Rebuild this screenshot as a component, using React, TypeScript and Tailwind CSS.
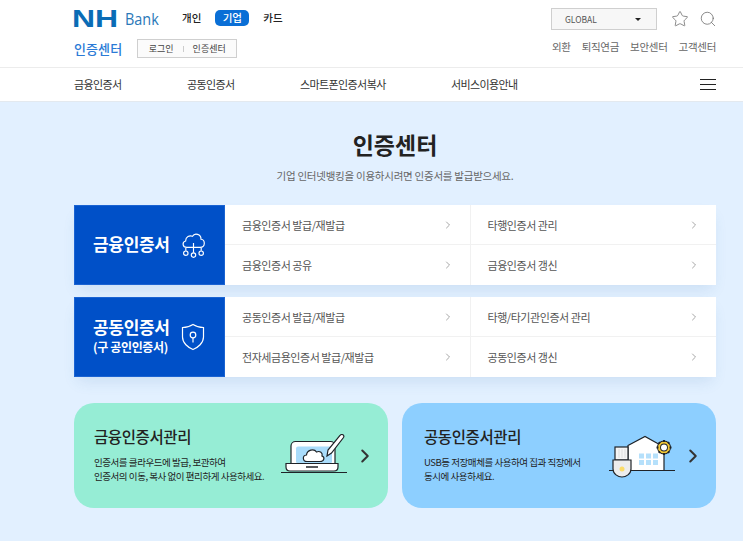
import React from 'react';
import { ChevronRight, Star, Search } from 'lucide-react';

const font = { fontFamily: '"Noto Sans CJK KR", "Noto Sans", sans-serif' };

const CloudIcon = () => (
  <svg width="25" height="28" viewBox="0 0 26 28" fill="none" stroke="white" strokeWidth="1.2">
    <path d="M6 16.5 C1.5 16.5 0.8 11 4.8 9.8 C4.8 5.5 9 3.5 12 5 C14 1 21 2.5 20.8 8 C25.5 8.6 25.5 16.5 20 16.5 Z" />
    <path d="M13 12 V22 M5 20 V17 M21 20 V17" />
    <circle cx="5" cy="22.5" r="2.3" />
    <circle cx="13" cy="24.5" r="2.3" />
    <circle cx="21" cy="22.5" r="2.3" />
  </svg>
);

const ShieldIcon = () => (
  <svg width="24" height="28" viewBox="0 0 24 28" fill="none" stroke="white" strokeWidth="1.2">
    <path d="M12 1.5 C15 3.5 19 4.5 22.5 4.5 V14 C22.5 20 17 24.5 12 26.5 C7 24.5 1.5 20 1.5 14 V4.5 C5 4.5 9 3.5 12 1.5 Z" />
    <circle cx="12" cy="12" r="2.8" />
    <path d="M12 15 V19.5" />
  </svg>
);

const LaptopIcon = () => (
  <svg width="68" height="44" viewBox="0 0 68 44" fill="none" stroke="#1f2328" strokeWidth="1.2">
    <path d="M10 30 V12 C10 9.5 12 7.5 14.5 7.5 H49.5 C52 7.5 54 9.5 54 12 V30 Z" fill="white" />
    <rect x="15" y="12.5" width="36" height="17" rx="2" fill="#a9dcfb" stroke="none" />
    <path d="M26 27.5 C21.5 27.5 21 21.5 25.5 21 C26 16 33 14 35.5 18 C39 16.5 42 19 41 22 C44 23 43.5 27.5 39 27.5 Z" fill="white" />
    <path d="M5 29.5 H57 V33 C57 35.5 55.5 37 53 37 H9 C6.5 37 5 35.5 5 33 Z" fill="white" />
    <path d="M25 33 H37" strokeWidth="1.5" />
    <path d="M0 38.5 H66" />
    <path d="M47 16 L46 22 L50.5 19 L62.5 3.5 C64 1 60.5 -0.5 59 1.5 Z" fill="white" />
  </svg>
);

const HouseIcon = () => (
  <svg width="68" height="46" viewBox="0 0 68 46" fill="none" stroke="#1f2328" strokeWidth="1.2" className="mt-0.5">
    <path d="M19 11.5 L36 2.5 L55 13 V36.5 H19 Z" fill="white" />
    <g fill="#b5e0fb" stroke="none">
      <rect x="30" y="19.5" width="5" height="5" />
      <rect x="37" y="19.5" width="5" height="5" />
      <rect x="44" y="19.5" width="5" height="5" />
      <rect x="30" y="26" width="5" height="5" />
      <rect x="37" y="26" width="5" height="5" />
      <rect x="44" y="26" width="5" height="5" />
    </g>
    <path d="M0 36.5 H66" />
    <circle cx="55" cy="13.5" r="5" fill="white" stroke="#1f2328" strokeWidth="4" />
    <circle cx="55" cy="13.5" r="5" fill="none" stroke="#f2c735" strokeWidth="2.2" />
    <path d="M55 6 V8 M55 19 V21 M47.5 13.5 H49.5 M60.5 13.5 H62.5 M49.7 8.2 L51 9.5 M59 17.5 L60.3 18.8 M60.3 8.2 L59 9.5 M51 17.5 L49.7 18.8" stroke="#1f2328" strokeWidth="2" />
    <rect x="6" y="13" width="13" height="13" fill="#f5f5f5" />
    <path d="M10 15 V24 M13 15 V24 M16 15 V24" stroke="#e2e2e2" />
    <path d="M4 26 H22 V35 C22 40 17 43 13 43 C9 43 4 40 4 35 Z" fill="#ededed" />
    <circle cx="13" cy="35" r="2.5" fill="#fbdc6a" stroke="none" />
  </svg>
);

const LinkCell = ({ label, bottom }: { label: string; bottom?: boolean }) => (
  <a className={`h-10 flex items-center justify-between pl-[17px] pr-[18px] text-[11px] tracking-[-0.45px] text-[#555] ${bottom ? '' : 'pt-px border-b border-[#f1f1f1]'}`}>
    <span>{label}</span>
    <ChevronRight className="w-[12px] h-[12px] -mr-[2px] text-[#8a8a8a]" strokeWidth={1.5} />
  </a>
);

const CertRow = ({ title, sub, icon, links }: { title: string; sub?: string; icon: React.ReactNode; links: string[] }) => (
  <div className="flex h-20 bg-white shadow-[0_8px_14px_-4px_rgba(60,110,170,0.14)]">
    <div className="w-[151px] shrink-0 bg-[#0050c8] border border-[#1a63d2] flex items-center pl-[18px] text-white">
      <div className="w-[88px] -mt-[2px]">
        <p className="text-[17px] leading-[20px] font-bold tracking-[-0.3px]">{title}</p>
        {sub && <p className="text-[12px] leading-[16px] font-bold tracking-[-0.35px] mt-0.5">{sub}</p>}
      </div>
      {icon}
    </div>
    <div className="flex-1 grid grid-cols-2">
      <div className="border-r border-[#f1f1f1] flex flex-col">
        <LinkCell label={links[0]} />
        <LinkCell label={links[1]} bottom />
      </div>
      <div className="flex flex-col">
        <LinkCell label={links[2]} />
        <LinkCell label={links[3]} bottom />
      </div>
    </div>
  </div>
);

const ManageCard = ({ title, lines, icon, color, inset }: { title: string; lines: string[]; icon: React.ReactNode; color: string; inset: string }) => (
  <div className={`w-[314px] h-[105px] rounded-[20px] flex items-center pr-[15px] ${inset} ${color}`}>
    <div className="flex-1 text-[#222] -mt-1">
      <p className="text-[15.5px] leading-[22px] font-medium tracking-[-0.4px] mb-2">{title}</p>
      {lines.map((line) => (
        <p key={line} className="text-[9.5px] leading-[14px] tracking-[-0.45px]">{line}</p>
      ))}
    </div>
    {icon}
    <ChevronRight className="w-[22px] h-[22px] ml-[5px] -mr-[3px] text-[#333]" strokeWidth={2.2} />
  </div>
);

export default function App() {
  return (
    <div className="w-[743px] h-[555px] bg-white overflow-hidden" style={font}>
      {/* Top header */}
      <header className="h-[68px] border-b border-[#ececec] pl-[74px] pr-[27px] flex justify-between">
        <div>
          <div className="flex items-center h-[37px]">
            <span className="-ml-[2px] w-[46px] text-[24px] leading-none font-bold text-[#0a6cb5] origin-left scale-x-[1.33]" style={{ fontFamily: '"Liberation Sans", sans-serif' }}>NH</span>
            <span className="ml-[7px] w-[33px] text-[17px] leading-none text-[#2a78b8] origin-left scale-x-[0.85]" style={{ fontFamily: '"Open Sans", sans-serif' }}>Bank</span>
            <nav className="flex items-center ml-[24px] text-[10.5px] font-medium text-[#222] -mt-px">
              <span>개인</span>
              <span className="ml-[14px] w-[34px] h-[16px] rounded-[5px] bg-[#0a6fd6] text-white flex items-center justify-center">기업</span>
              <span className="ml-[14px]">카드</span>
            </nav>
          </div>
          <div className="flex items-center mt-[2px]">
            <span className="text-[13px] font-medium text-[#2a7ad6] tracking-[0.1px]">인증센터</span>
            <div className="ml-[15px] w-[100px] h-[19px] border border-[#cfcfcf] bg-[#fbfbfb] flex items-center justify-center text-[9px] text-[#444]">
              <span>로그인</span>
              <span className="mx-[9px] w-px h-[6px] bg-[#ccc]" />
              <span>인증센터</span>
            </div>
          </div>
        </div>
        <div className="flex flex-col items-end">
          <div className="flex items-center h-[37px] pt-[1px] -mr-px">
            <div className="w-[106px] h-[22px] border border-[#cfcfcf] bg-[#f7f7f7] flex items-center justify-between pl-[13px] pr-[15px] text-[8.5px] text-[#555]">
              <span>GLOBAL</span>
              <span className="w-0 h-0 border-x-[3px] border-x-transparent border-t-[3px] border-t-[#222]" />
            </div>
            <Star className="w-[18px] h-[18px] ml-[14px] text-[#666]" strokeWidth={1} />
            <Search className="w-[18px] h-[18px] ml-[10px] text-[#666]" strokeWidth={1} />
          </div>
          <div className="flex gap-[11px] text-[10.5px] text-[#666] tracking-[-0.3px] mt-[2px]">
            <span>외환</span>
            <span>퇴직연금</span>
            <span>보안센터</span>
            <span>고객센터</span>
          </div>
        </div>
      </header>

      {/* Main nav */}
      <nav className="h-[33px] pl-[74px] pr-[27px] flex items-center text-[11px] text-[#333] tracking-[-0.6px]">
        <span className="w-[113px]">금융인증서</span>
        <span className="w-[113px]">공동인증서</span>
        <span className="w-[151px]">스마트폰인증서복사</span>
        <span>서비스이용안내</span>
        <div className="ml-auto flex flex-col gap-[4px] w-4">
          <span className="h-px bg-[#222]" />
          <span className="h-px bg-[#222]" />
          <span className="h-px bg-[#222]" />
        </div>
      </nav>

      {/* Content */}
      <main className="h-[440px] bg-[#e2f0ff] border-t border-[#e3e9ef] pl-[74px] pr-[27px]">
        <div className="text-center pt-[25px] w-[642px]">
          <h1 className="text-[23px] leading-[34px] font-bold text-[#222]">인증센터</h1>
          <p className="mt-[8px] text-[10.5px] leading-[14px] text-[#666] tracking-[-0.25px]">기업 인터넷뱅킹을 이용하시려면 인증서를 발급받으세요.</p>
        </div>
        <div className="w-[642px] mt-[22px] flex flex-col gap-3">
          <CertRow title="금융인증서" icon={<CloudIcon />} links={['금융인증서 발급/재발급', '금융인증서 공유', '타행인증서 관리', '금융인증서 갱신']} />
          <CertRow title="공동인증서" sub="(구 공인인증서)" icon={<ShieldIcon />} links={['공동인증서 발급/재발급', '전자세금용인증서 발급/재발급', '타행/타기관인증서 관리', '공동인증서 갱신']} />
        </div>
        <div className="w-[642px] mt-[26px] flex justify-between">
          <ManageCard color="bg-[#96edd5]" inset="pl-5" title="금융인증서관리" lines={['인증서를 클라우드에 발급, 보관하여', '인증서의 이동, 복사 없이 편리하게 사용하세요.']} icon={<LaptopIcon />} />
          <ManageCard color="bg-[#8dcfff]" inset="pl-[22px]" title="공동인증서관리" lines={['USB등 저장매체를 사용하여 집과 직장에서', '동시에 사용하세요.']} icon={<HouseIcon />} />
        </div>
      </main>
    </div>
  );
}
